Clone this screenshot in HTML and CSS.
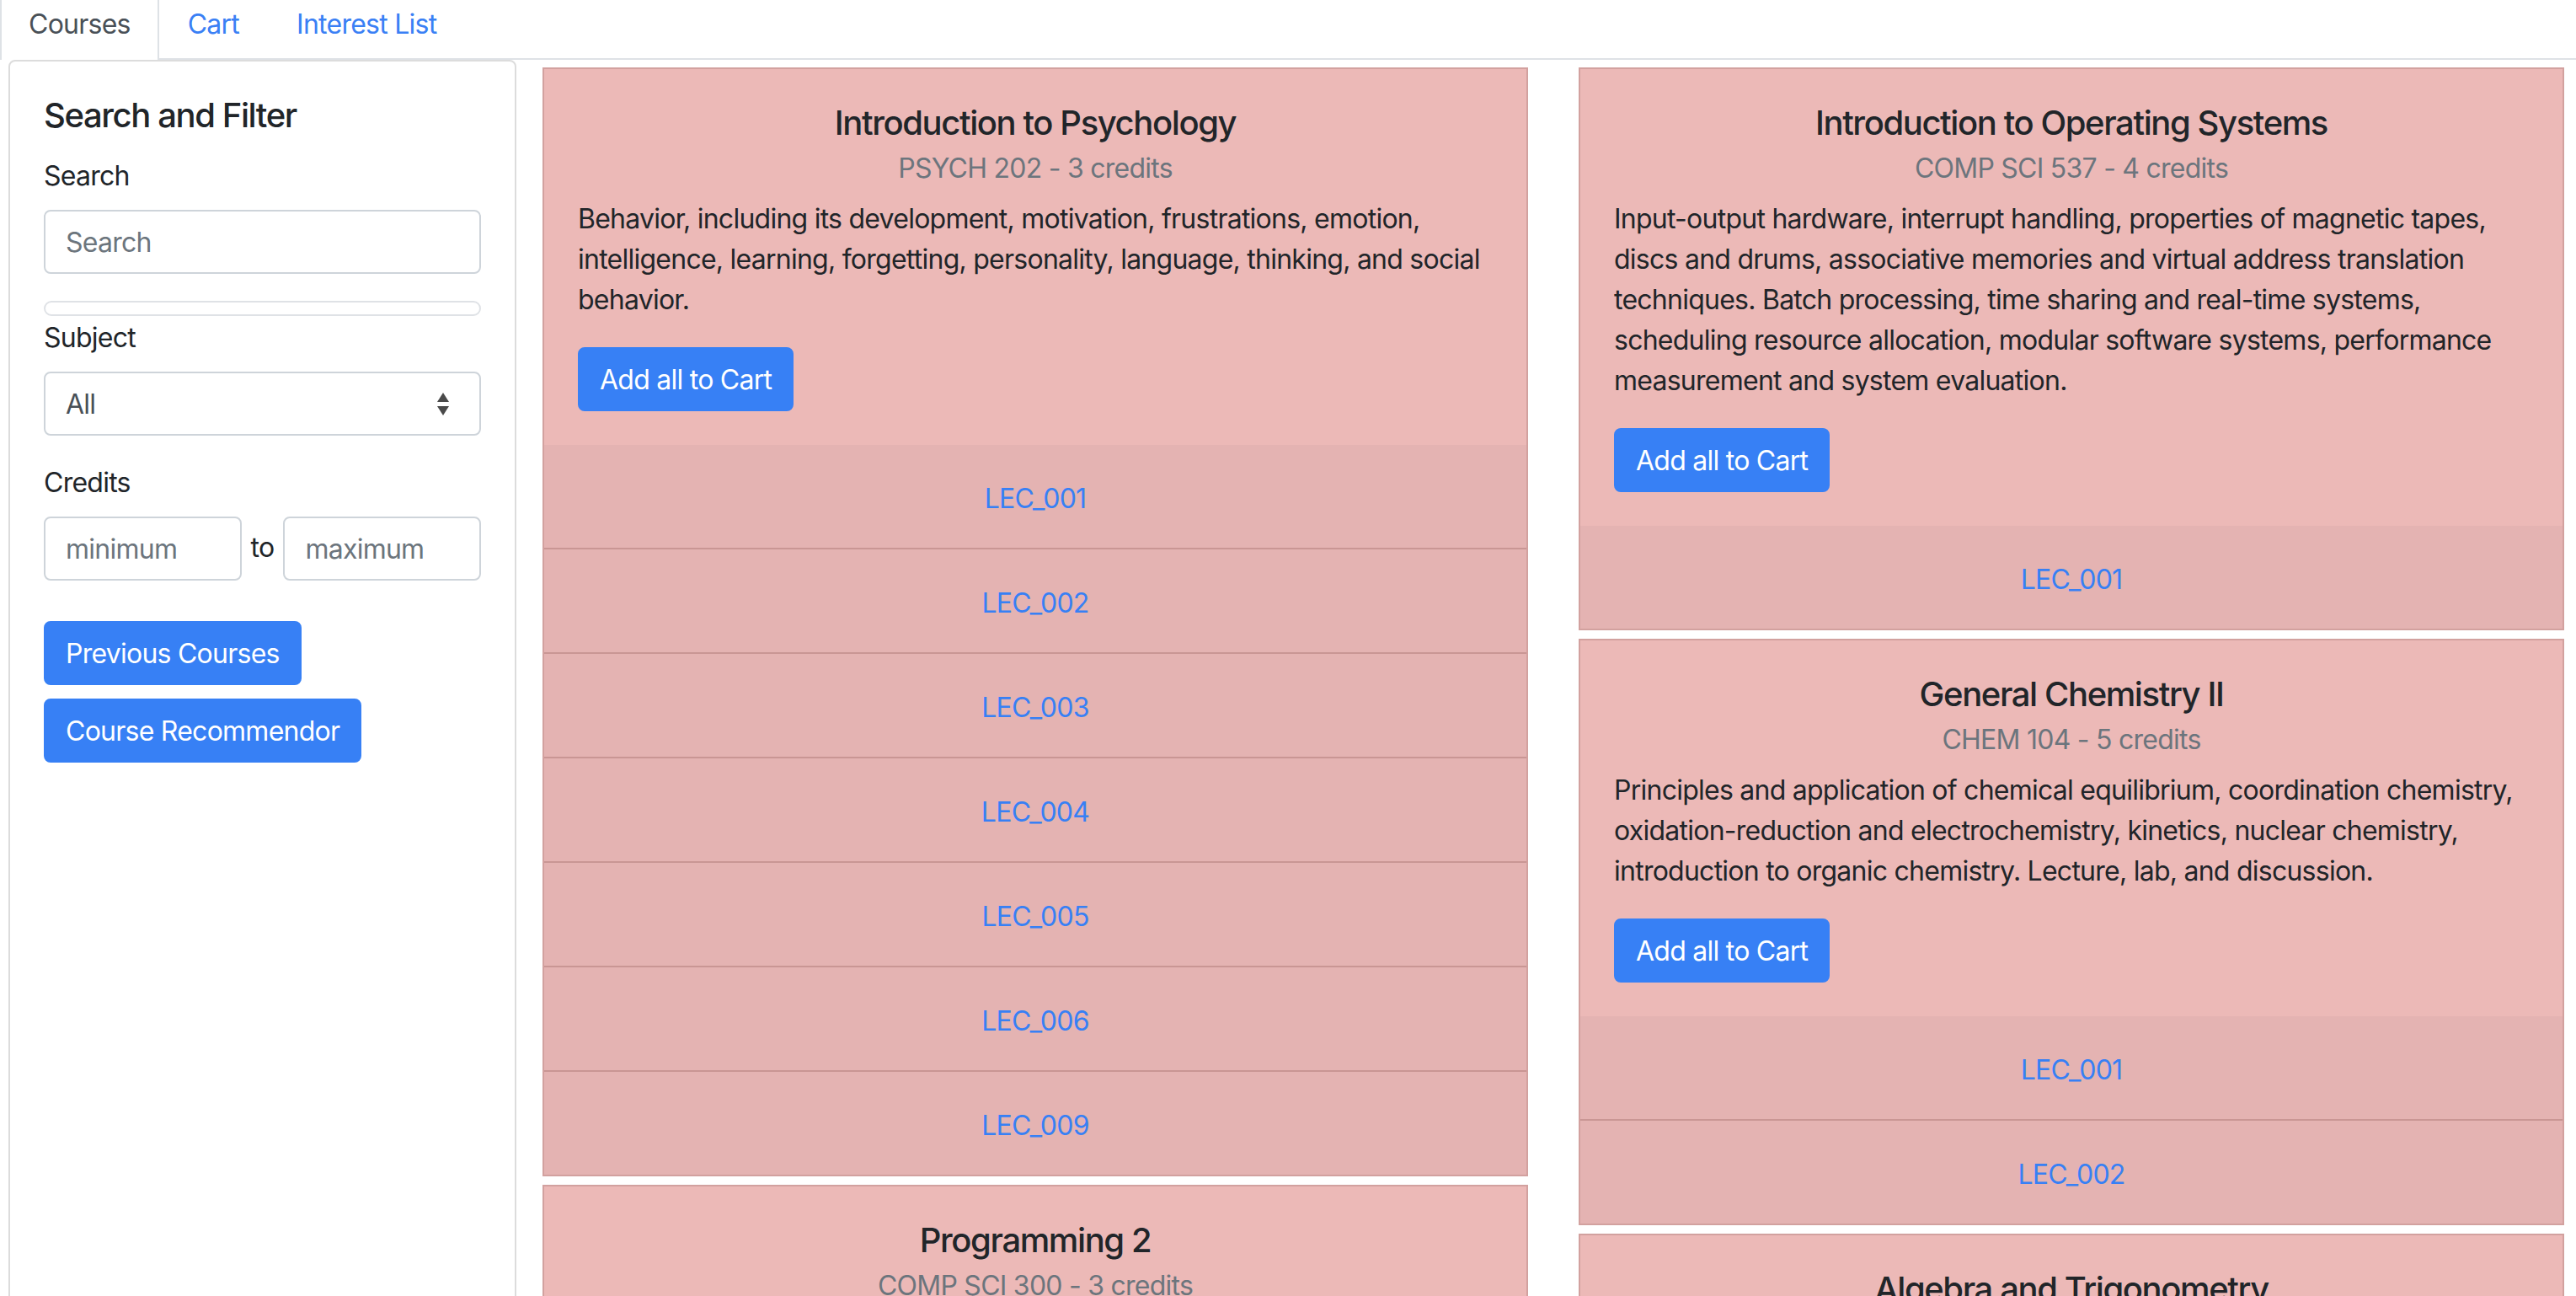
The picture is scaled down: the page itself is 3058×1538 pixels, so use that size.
FILE: index.html
```html
<!DOCTYPE html>
<html lang="en">
<head>
<meta charset="utf-8">
<title>Courses</title>
<link rel="stylesheet" href="styles.css">
</head>
<body>
<nav class="tabs">
  <a class="tab active" href="#">Courses</a>
  <a class="tab" href="#">Cart</a>
  <a class="tab" href="#">Interest List</a>
</nav>
<div class="page">
  <aside class="filter">
    <h5 class="filter-title">Search and Filter</h5>
    <label class="lbl">Search</label>
    <input class="field" type="text" placeholder="Search">
    <div class="empty-bar"></div>
    <label class="lbl lbl-tight">Subject</label>
    <div class="select">
      <span>All</span>
      <svg class="select-arrows" width="16" height="28" viewBox="0 0 16 28"><path d="M8 0 L15 11 L1 11 Z" fill="#4a4a4a"/><path d="M1 16 L15 16 L8 27 Z" fill="#4a4a4a"/></svg>
    </div>
    <label class="lbl">Credits</label>
    <div class="credit-row">
      <input class="field" type="text" placeholder="minimum">
      <span class="to">to</span>
      <input class="field" type="text" placeholder="maximum">
    </div>
    <div class="side-btns">
      <button class="btn">Previous Courses</button>
      <button class="btn">Course Recommendor</button>
    </div>
  </aside>
  <main class="courses">
    <div class="col">
      <section class="card">
        <div class="card-body">
          <h5 class="card-title">Introduction to Psychology</h5>
          <p class="card-sub">PSYCH 202 - 3 credits</p>
          <p class="card-desc">Behavior, including its development, motivation, frustrations, emotion, intelligence, learning, forgetting, personality, language, thinking, and social behavior.</p>
          <button class="btn">Add all to Cart</button>
        </div>
        <ul class="lectures">
          <li class="lec">LEC_001</li>
          <li class="lec">LEC_002</li>
          <li class="lec">LEC_003</li>
          <li class="lec">LEC_004</li>
          <li class="lec">LEC_005</li>
          <li class="lec">LEC_006</li>
          <li class="lec">LEC_009</li>
        </ul>
      </section>
      <section class="card">
        <div class="card-body">
          <h5 class="card-title">Programming 2</h5>
          <p class="card-sub">COMP SCI 300 - 3 credits</p>
          <p class="card-desc">Introduction to Object-Oriented Programming using classes and objects to solve more complex problems.</p>
          <button class="btn">Add all to Cart</button>
        </div>
        <ul class="lectures">
          <li class="lec">LEC_001</li>
        </ul>
      </section>
    </div>
    <div class="col">
      <section class="card">
        <div class="card-body">
          <h5 class="card-title">Introduction to Operating Systems</h5>
          <p class="card-sub">COMP SCI 537 - 4 credits</p>
          <p class="card-desc">Input-output hardware, interrupt handling, properties of magnetic tapes, discs and drums, associative memories and virtual address translation techniques. Batch processing, time sharing and real-time systems, scheduling resource allocation, modular software systems, performance measurement and system evaluation.</p>
          <button class="btn">Add all to Cart</button>
        </div>
        <ul class="lectures">
          <li class="lec">LEC_001</li>
        </ul>
      </section>
      <section class="card">
        <div class="card-body">
          <h5 class="card-title">General Chemistry II</h5>
          <p class="card-sub">CHEM 104 - 5 credits</p>
          <p class="card-desc">Principles and application of chemical equilibrium, coordination chemistry, oxidation-reduction and electrochemistry, kinetics, nuclear chemistry, introduction to organic chemistry. Lecture, lab, and discussion.</p>
          <button class="btn">Add all to Cart</button>
        </div>
        <ul class="lectures">
          <li class="lec">LEC_001</li>
          <li class="lec">LEC_002</li>
        </ul>
      </section>
      <section class="card">
        <div class="card-body">
          <h5 class="card-title">Algebra and Trigonometry</h5>
          <p class="card-sub">MATH 171 - 5 credits</p>
          <p class="card-desc">Brief review of algebra, functions and graphs, exponential and logarithmic functions, trigonometry.</p>
          <button class="btn">Add all to Cart</button>
        </div>
        <ul class="lectures">
          <li class="lec">LEC_001</li>
        </ul>
      </section>
    </div>
  </main>
</div>
</body>
</html>
```

FILE: styles.css
```css
html, body {
  margin: 0;
  padding: 0;
  overflow: hidden;
  background: #ffffff;
}
body {
  font-family: Inter, "Liberation Sans", sans-serif;
  font-size: 32px;
  line-height: 48px;
  letter-spacing: -0.75px;
  color: #212529;
}
.tabs {
  display: flex;
  height: 71px;
  box-sizing: border-box;
  border-bottom: 2px solid #dee2e6;
}
.tab {
  display: block;
  box-sizing: border-box;
  height: 69px;
  padding: 5px 32px 0;
  border: 2px solid transparent;
  border-top: none;
  border-bottom: none;
  color: #3a80f5;
  text-decoration: none;
}
.tab.active {
  height: 71px;
  color: #495057;
  background: #ffffff;
  border-color: #dee2e6;
}
.page {
  display: flex;
  align-items: flex-start;
  padding-left: 10px;
}
.filter {
  flex: none;
  width: 603px;
  min-height: 1600px;
  box-sizing: border-box;
  border: 2px solid #dcdcdc;
  border-radius: 8px;
  padding: 40px;
}
.filter-title {
  margin: 0 0 24px;
  font-size: 40px;
  line-height: 48px;
  font-weight: 500;
  letter-spacing: -1.4px;
}
.lbl {
  display: block;
  margin-bottom: 16px;
}
.lbl-tight {
  margin-top: 2px;
}
.field {
  display: block;
  box-sizing: border-box;
  width: 100%;
  height: 76px;
  padding: 0 24px;
  border: 2px solid #ced4da;
  border-radius: 8px;
  font: inherit;
  letter-spacing: inherit;
  color: #495057;
  background: #fff;
}
.field::placeholder {
  color: #6c757d;
}
.empty-bar {
  height: 18px;
  margin-top: 32px;
  box-sizing: border-box;
  border: 2px solid #dfe2e6;
  border-radius: 9px;
}
.select {
  display: flex;
  align-items: center;
  justify-content: space-between;
  box-sizing: border-box;
  height: 76px;
  padding: 2px 35px 0 24px;
  border: 2px solid #ced4da;
  border-radius: 8px;
  color: #495057;
  margin-bottom: 32px;
}
.credit-row {
  display: flex;
  align-items: center;
}
.credit-row .field {
  flex: 1;
  min-width: 0;
}
.to {
  padding: 0 11px;
  margin-top: -2px;
}
.side-btns {
  display: flex;
  flex-direction: column;
  align-items: flex-start;
  gap: 16px;
  margin-top: 48px;
}
.btn {
  display: inline-flex;
  align-items: center;
  box-sizing: border-box;
  height: 76px;
  padding: 2px 24px 0;
  border: 2px solid #3780f5;
  border-radius: 8px;
  background: #3780f5;
  color: #ffffff;
  font: inherit;
  letter-spacing: inherit;
}
.courses {
  display: flex;
  gap: 60px;
  margin-left: 31px;
  margin-top: 9px;
}
.col {
  width: 1170px;
  display: flex;
  flex-direction: column;
  gap: 10px;
}
.card {
  border: 2px solid #d2a19f;
  background: #ecb9b7;
}
.card-body {
  padding: 40px;
}
.card-title {
  margin: 0 0 6px;
  font-size: 40px;
  line-height: 48px;
  font-weight: 500;
  letter-spacing: -1.4px;
  text-align: center;
}
.card-sub {
  margin: 0 0 12px;
  color: #6c757d;
  text-align: center;
}
.card-desc {
  margin: 0 0 32px;
}
.lectures {
  list-style: none;
  margin: 0;
  padding: 0;
}
.lec {
  display: flex;
  align-items: center;
  justify-content: center;
  box-sizing: border-box;
  height: 122px;
  padding-top: 5px;
  background: #e4b3b2;
  color: #3780f5;
}
.lec + .lec {
  height: 124px;
  border-top: 2px solid #c99694;
}
```
